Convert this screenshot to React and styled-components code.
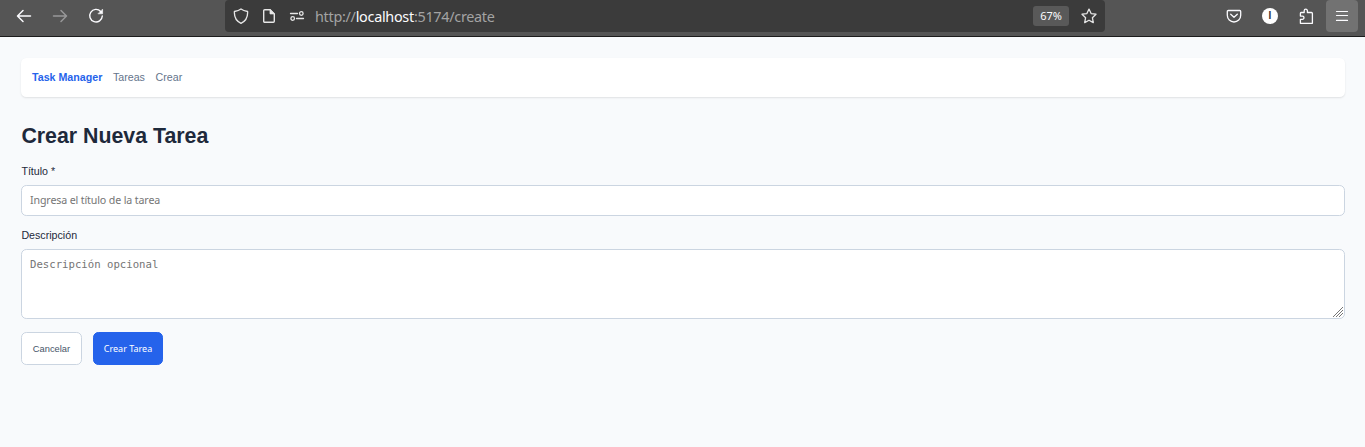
import React from "react";
import styled, { createGlobalStyle } from "styled-components";

const GlobalStyle = createGlobalStyle`
  *, *::before, *::after { box-sizing: border-box; }
  body {
    margin: 0;
    background: #f8fafc;
    color: #1e293b;
    font-family: "Liberation Sans", Arial, sans-serif;
    font-size: 10.667px;
  }
`;

const Window = styled.div`
  display: flex;
  flex-direction: column;
  height: 447px;
  overflow: hidden;
`;

const Toolbar = styled.header`
  display: flex;
  align-items: flex-start;
  flex: none;
  height: 37px;
  padding-right: 7px;
  background: #555555;
  border-bottom: 1px solid #1c1c1c;
`;

const IconGroup = styled.div`
  display: flex;
  flex: none;
  width: ${(p) => p.$width || "auto"};
  padding-left: ${(p) => p.$inset || 0};
  margin-left: ${(p) => (p.$end ? "auto" : 0)};
  gap: 4px;
`;

const IconButton = styled.button`
  display: flex;
  align-items: center;
  justify-content: center;
  width: 32px;
  height: 32px;
  padding: 0;
  border: 0;
  border-radius: 4px;
  color: #fbfbfe;
  background: ${(p) => (p.$active ? "#727272" : "transparent")};
  opacity: ${(p) => (p.disabled ? 0.4 : 1)};
`;

const AddressBar = styled.div`
  display: flex;
  align-items: center;
  width: 880px;
  height: 32px;
  padding-right: 8px;
  border-radius: 4px;
  background: #3b3b3b;
  color: #e6e6e6;
`;

const SiteIcons = styled.div`
  display: flex;
  align-items: center;
  gap: 12px;
  padding-left: 8px;
  width: 90px;
`;

const Url = styled.div`
  flex: 1;
  padding-top: 1px;
  font: 14.4px/20px "Noto Sans", sans-serif;
  letter-spacing: -0.29px;
  color: #a3a3a3;
`;

const Host = styled.span`
  color: #fbfbfe;
`;

const Zoom = styled.div`
  width: 36px;
  height: 20px;
  margin-right: 12px;
  border-radius: 3px;
  background: #595959;
  color: #fbfbfe;
  font: 11px/20px "Noto Sans", sans-serif;
  text-align: center;
`;

const Account = styled.span`
  width: 16px;
  height: 16px;
  border-radius: 50%;
  background: #ffffff;
  color: #333333;
  font: bold 10px/16px "Liberation Sans", sans-serif;
  text-align: center;
`;

const Page = styled.main`
  flex: 1;
  padding: 21px 20px 0 21px;
`;

const Nav = styled.nav`
  display: flex;
  align-items: center;
  gap: 10.667px;
  height: 39px;
  margin-bottom: 25px;
  padding: 0 11px 2px;
  border-radius: 5.333px;
  background: #ffffff;
  box-shadow: 0 1px 2px rgba(0, 0, 0, 0.1);
`;

const NavLink = styled.a`
  color: ${(p) => (p.$brand ? "#2563eb" : "#64748b")};
  font-weight: ${(p) => (p.$brand ? 700 : 400)};
`;

const Title = styled.h1`
  margin: 0 0 15px;
  padding-left: 0.4px;
  font-size: 21.333px;
  line-height: 28px;
`;

const Field = styled.div`
  position: relative;
  margin-bottom: ${(p) => p.$gap};
`;

const Label = styled.label`
  display: block;
  height: 12px;
  margin-bottom: 8px;
  padding-left: 0.4px;
  line-height: 12px;
`;

const Input = styled.input`
  display: block;
  width: 100%;
  height: 31px;
  padding: 0 8px 2px;
  border: 1px solid #cbd5e1;
  border-radius: 5.333px;
  background: #ffffff;
  font: 10.667px "Noto Sans", sans-serif;
  letter-spacing: -0.14px;
  &::placeholder { color: #757575; }
`;

const TextArea = styled.textarea`
  display: block;
  width: 100%;
  height: 70px;
  padding: 8px;
  border: 1px solid #cbd5e1;
  border-radius: 5.333px;
  background: #ffffff;
  font: 10.667px/13px "DejaVu Sans Mono", monospace;
  resize: none;
  &::placeholder { color: #757575; }
`;

const Grip = styled.svg`
  position: absolute;
  right: 2px;
  bottom: 2px;
`;

const Actions = styled.div`
  display: flex;
  gap: 11px;
`;

const Button = styled.button`
  width: ${(p) => (p.$primary ? "70px" : "61px")};
  height: 33px;
  padding: 0;
  border: 1px solid ${(p) => (p.$primary ? "#2563eb" : "#cbd5e1")};
  border-radius: 5.333px;
  background: ${(p) => (p.$primary ? "#2563eb" : "#ffffff")};
  color: ${(p) => (p.$primary ? "#ffffff" : "#475569")};
  font: ${(p) => (p.$primary ? '9px "Noto Sans", sans-serif' : '9.333px "Liberation Sans", sans-serif')};
`;

const Icon = ({ children, width = 1.3 }) => (
  <svg width="16" height="16" viewBox="0 0 16 16" fill="none" stroke="currentColor"
    strokeWidth={width} strokeLinecap="round" strokeLinejoin="round">
    {children}
  </svg>
);

export default function App() {
  return (
    <Window>
      <GlobalStyle />
      <Toolbar>
        <IconGroup $width="225px" $inset="8px">
          <IconButton aria-label="Back">
            <Icon width={1.5}><path d="M14.5 8H1.8M7 2.5 1.5 8 7 13.5" /></Icon>
          </IconButton>
          <IconButton aria-label="Forward" disabled>
            <Icon width={1.5}><path d="M1.5 8h12.7M9 2.5 14.5 8 9 13.5" /></Icon>
          </IconButton>
          <IconButton aria-label="Reload">
            <Icon width={1.4}>
              <path d="M12.7 3.5A6.3 6.3 0 1 0 14.3 8" />
              <path d="M14.6 1.5v4.3h-4.3z" fill="currentColor" strokeWidth=".6" />
            </Icon>
          </IconButton>
        </IconGroup>
        <AddressBar>
          <SiteIcons>
            <Icon><path d="M8 .9c2 1.5 4.2 2.1 6.6 2.6.3 4.8-1.4 9.3-6.6 11.8C2.8 12.8 1.1 8.3 1.4 3.5 3.8 3 6 2.4 8 .9z" /></Icon>
            <Icon width={1.4}>
              <path d="M3.7 1.7h5.4l4.2 4.2v7.4a1 1 0 0 1-1 1H3.7a1 1 0 0 1-1-1V2.7a1 1 0 0 1 1-1z" />
              <path d="M9 1.8v4.1h4.2z" fill="currentColor" strokeWidth=".8" />
            </Icon>
            <Icon width={1.3}>
              <path d="M1.5 5.5h7M7.5 10.5h7" />
              <circle cx="12.3" cy="5.5" r="1.8" />
              <circle cx="3.7" cy="10.5" r="1.8" />
            </Icon>
          </SiteIcons>
          <Url>http://<Host>localhost</Host>:5174/create</Url>
          <Zoom>67%</Zoom>
          <Icon width={1.3}><path d="m8 1.1 2.1 4.5 4.9.6-3.6 3.5.9 4.9L8 12.2l-4.3 2.4.9-4.9L1 6.2l4.9-.6z" /></Icon>
        </AddressBar>
        <IconGroup $end>
          <IconButton aria-label="Pocket">
            <Icon width={1.3}>
              <path d="M2.3 2.5h11.4a1 1 0 0 1 1 1v3.8a6.7 6.7 0 0 1-13.4 0V3.5a1 1 0 0 1 1-1z" />
              <path d="m4.7 6.3 3.3 3 3.3-3" />
            </Icon>
          </IconButton>
          <IconButton aria-label="Account"><Account>I</Account></IconButton>
          <IconButton aria-label="Extensions">
            <Icon width={1.3}>
              <path d="M3.2 4.5h3V2.8a1.6 1.6 0 0 1 3.2 0v1.7h4a1 1 0 0 1 1 1v9.8H2.4v-4h2a1.6 1.6 0 0 0 0-3.2h-2V5.5a1 1 0 0 1 .8-1z" />
            </Icon>
          </IconButton>
          <IconButton aria-label="Menu" $active>
            <Icon width={1.2}><path d="M2.5 3.5h11M2.5 7.5h11M2.5 12.4h11" /></Icon>
          </IconButton>
        </IconGroup>
      </Toolbar>
      <Page>
        <Nav>
          <NavLink $brand>Task Manager</NavLink>
          <NavLink>Tareas</NavLink>
          <NavLink>Crear</NavLink>
        </Nav>
        <Title>Crear Nueva Tarea</Title>
        <Field $gap="13px">
          <Label htmlFor="title">Título *</Label>
          <Input id="title" placeholder="Ingresa el título de la tarea" />
        </Field>
        <Field $gap="13px">
          <Label htmlFor="description">Descripción</Label>
          <TextArea id="description" placeholder="Descripción opcional" />
          <Grip width="10" height="10" viewBox="0 0 10 10" stroke="#666" strokeWidth=".9">
            <path d="M0 10 10 0M3 10l7-7M6 10l4-4" />
          </Grip>
        </Field>
        <Actions>
          <Button>Cancelar</Button>
          <Button $primary>Crear Tarea</Button>
        </Actions>
      </Page>
    </Window>
  );
}
